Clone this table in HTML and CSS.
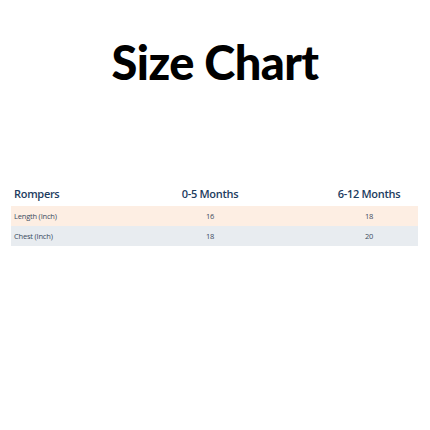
FILE: index.html
```html
<!DOCTYPE html>
<html>
<head>
<meta charset="utf-8">
<link rel="stylesheet" href="styles.css">
</head>
<body>
<div class="page">
  <h1 class="title">Size Chart</h1>
  <div class="chart">
    <div class="row head">
      <div class="c1">Rompers</div>
      <div class="c2">0-5 Months</div>
      <div class="c3">6-12 Months</div>
    </div>
    <div class="row peach">
      <div class="c1">Length (Inch)</div>
      <div class="c2">16</div>
      <div class="c3">18</div>
    </div>
    <div class="row grey">
      <div class="c1">Chest (Inch)</div>
      <div class="c2">18</div>
      <div class="c3">20</div>
    </div>
  </div>
</div>
</body>
</html>
```
FILE: styles.css
```css
html, body { margin: 0; padding: 0; background: #fff; }
.page { width: 430px; height: 430px; padding-top: 30px; box-sizing: border-box; }
.title {
  margin: 0;
  text-align: center;
  font-family: Lato, sans-serif;
  font-weight: 900;
  font-size: 47px;
  line-height: 64px;
  color: #000;
  letter-spacing: -0.6px;
}
.chart { margin: 91px 12px 0 11px; font-family: "Open Sans", sans-serif; color: #1d3557; }
.row { display: grid; grid-template-columns: 90px 218px 100px; align-items: center; }
.head { height: 21px; padding-bottom: 4px; box-sizing: border-box; font-size: 11px; font-weight: 600; color: #1d3c60; letter-spacing: -0.3px; }
.head .c1 { padding-left: 3px; }
.peach, .grey { height: 20px; font-size: 7.5px; color: #3a4b60; letter-spacing: -0.2px; }
.peach { background: #fdeee3; }
.grey { background: #e8ecf0; }
.peach .c1, .grey .c1 { padding-left: 3px; }
.c2, .c3 { text-align: center; }
```
